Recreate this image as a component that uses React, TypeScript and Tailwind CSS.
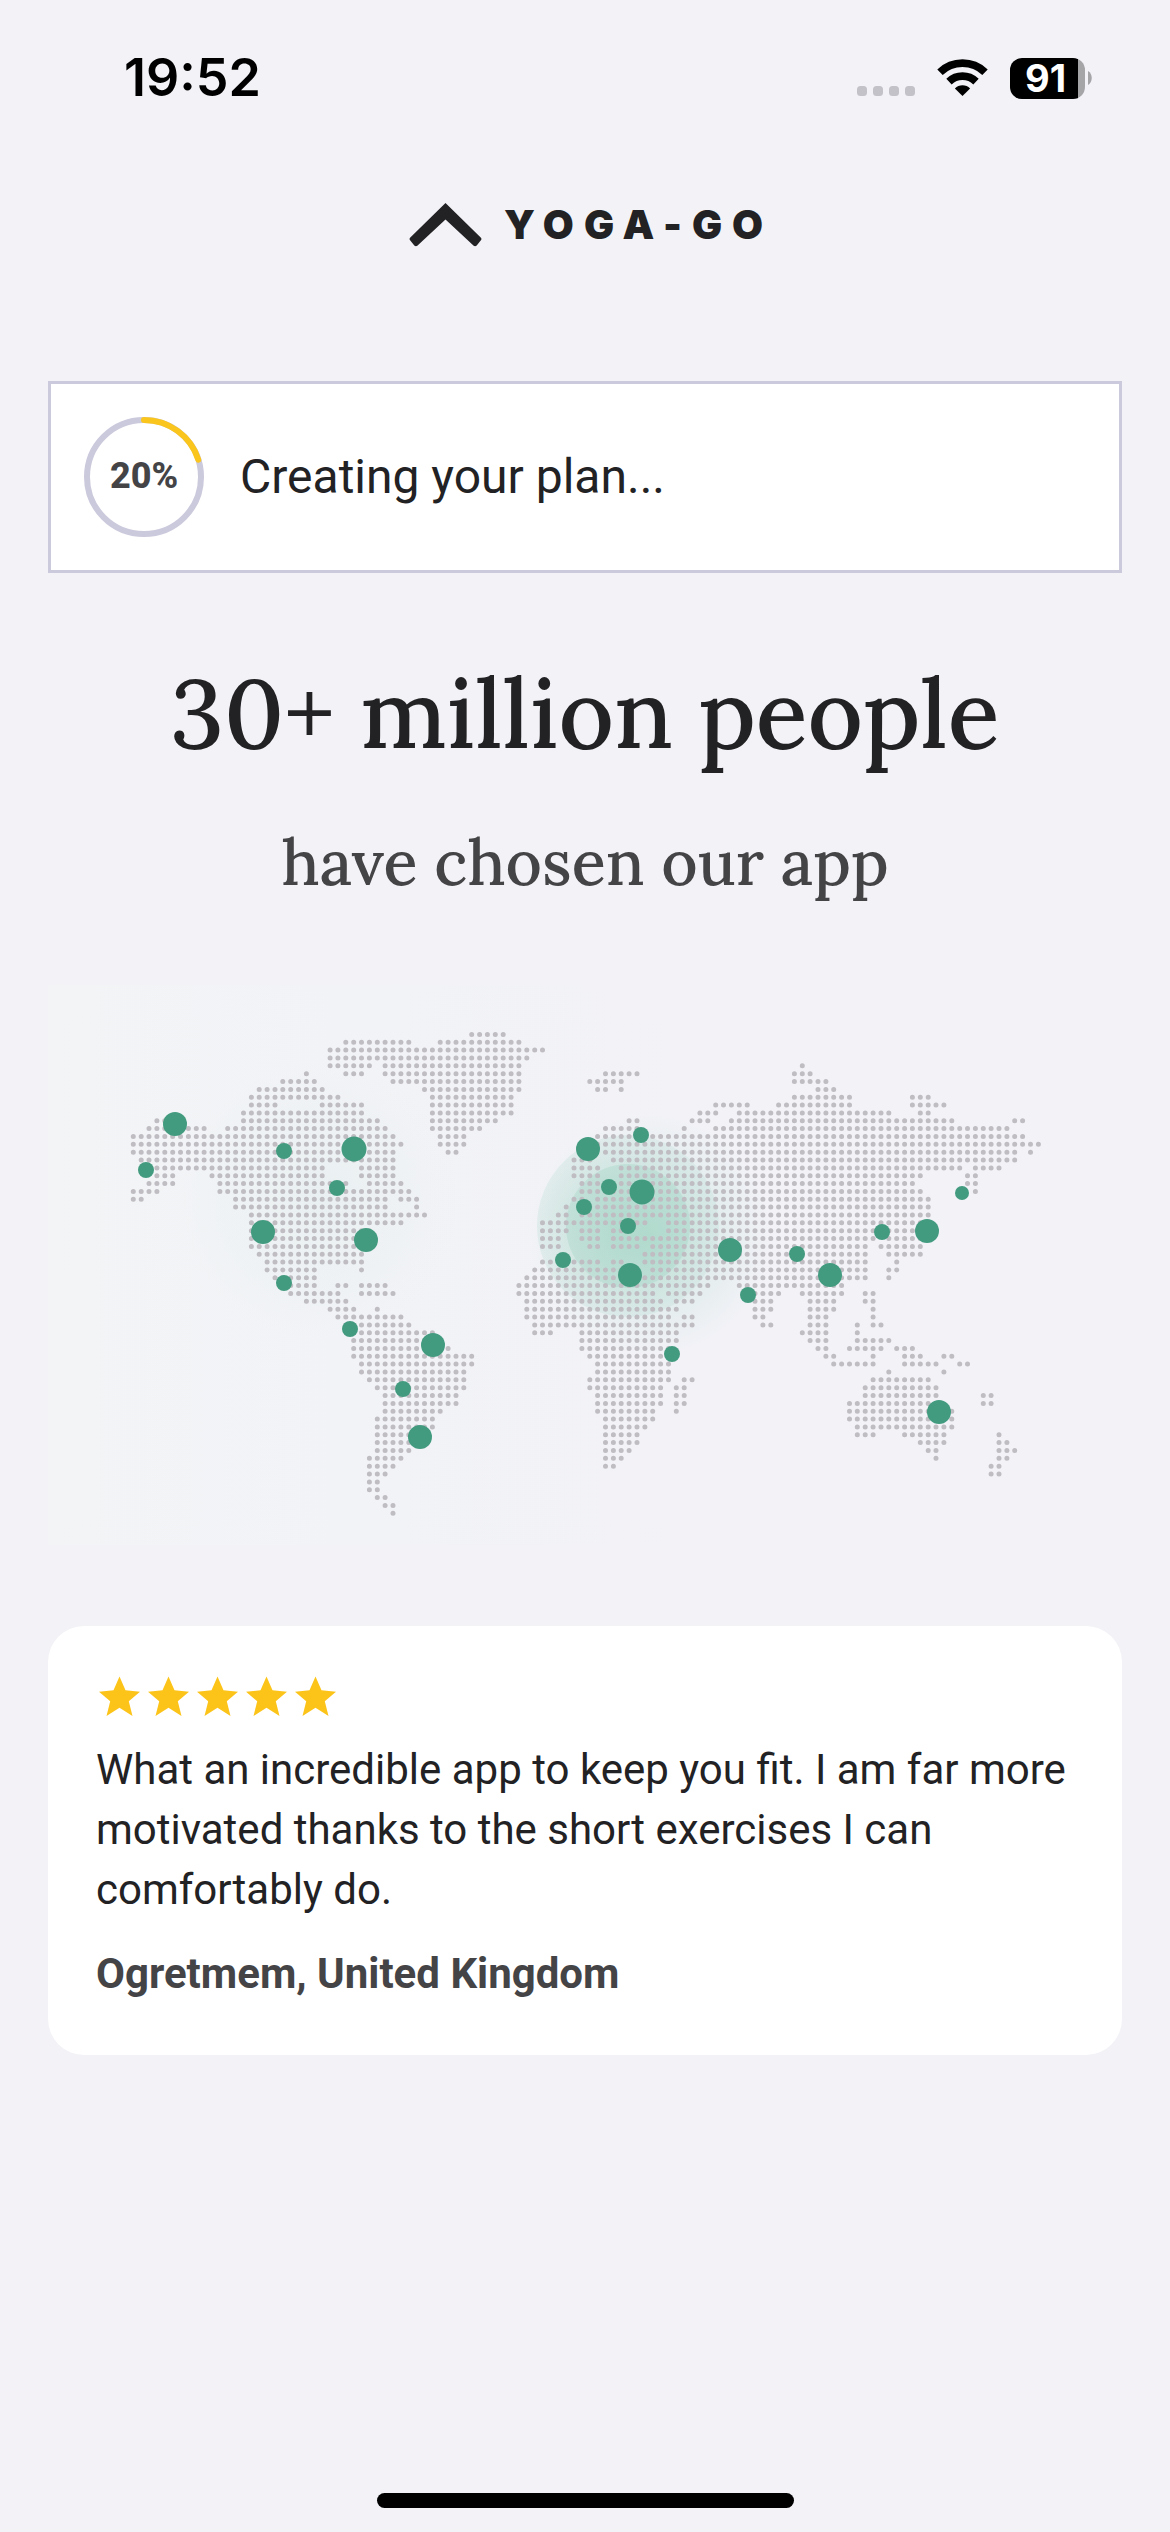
type Run = [number, number];

// Land cells of the dotted map, listed row by row as [first column, last column].
const LAND: Run[][] = [
  [[43, 47]],
  [[27, 35], [39, 49]],
  [[25, 52]],
  [[25, 50]],
  [[25, 30], [32, 49], [85, 85]],
  [[22, 22], [27, 29], [32, 49], [60, 64], [84, 86]],
  [[19, 23], [33, 49], [58, 62], [84, 88]],
  [[16, 24], [37, 49], [59, 60], [62, 62], [87, 89]],
  [[15, 26], [38, 48], [84, 91], [99, 101]],
  [[15, 18], [24, 29], [38, 48], [74, 78], [82, 91], [99, 103]],
  [[14, 29], [38, 48], [72, 74], [77, 96], [100, 101]],
  [[3, 4], [14, 31], [38, 46], [63, 64], [71, 73], [76, 104], [112, 113]],
  [[2, 4], [7, 9], [12, 32], [38, 44], [60, 64], [70, 70], [74, 111]],
  [[0, 33], [39, 42], [59, 113]],
  [[0, 34], [39, 42], [59, 115]],
  [[0, 33], [40, 41], [60, 112], [114, 114]],
  [[1, 33], [56, 58], [61, 112]],
  [[2, 24], [29, 33], [56, 59], [62, 105], [107, 110]],
  [[3, 5], [10, 24], [29, 33], [56, 59], [62, 100], [106, 107]],
  [[2, 5], [11, 27], [30, 34], [57, 60], [62, 99], [106, 107]],
  [[0, 3], [11, 35], [57, 100], [107, 107]],
  [[0, 1], [13, 32], [34, 36], [56, 57], [59, 101]],
  [[13, 32], [36, 36], [55, 55], [57, 101]],
  [[15, 37], [54, 55], [57, 101]],
  [[15, 34], [52, 65], [68, 101]],
  [[15, 30], [52, 55], [57, 59], [61, 62], [68, 94], [96, 99]],
  [[15, 30], [52, 54], [57, 59], [61, 94], [96, 100]],
  [[15, 29], [52, 54], [58, 59], [61, 64], [66, 93], [95, 100]],
  [[16, 29], [65, 93], [96, 100]],
  [[17, 29], [52, 53], [56, 59], [61, 62], [65, 93], [97, 97]],
  [[17, 23], [29, 29], [51, 64], [66, 93], [96, 97]],
  [[18, 23], [50, 93], [96, 96]],
  [[19, 23], [26, 27], [29, 32], [49, 73], [77, 90]],
  [[20, 26], [29, 33], [49, 66], [68, 72], [78, 82], [85, 90], [93, 94]],
  [[22, 27], [50, 67], [69, 71], [79, 81], [86, 89], [93, 94]],
  [[25, 28], [31, 31], [50, 69], [79, 81], [86, 89], [94, 94]],
  [[26, 34], [50, 68], [70, 71], [79, 80], [86, 88], [94, 94]],
  [[27, 35], [51, 71], [80, 81], [86, 88], [92, 92], [94, 95]],
  [[28, 38], [51, 53], [57, 69], [85, 88], [92, 92]],
  [[28, 39], [57, 69], [86, 88], [92, 96]],
  [[28, 40], [57, 68], [87, 88], [91, 95], [97, 99]],
  [[28, 43], [58, 68], [88, 89], [94, 94], [98, 100], [103, 104]],
  [[29, 43], [59, 68], [89, 94], [98, 102], [105, 106]],
  [[29, 42], [59, 68], [96, 96], [103, 103]],
  [[30, 42], [58, 68], [70, 71], [94, 101]],
  [[31, 42], [58, 67], [69, 70], [93, 102]],
  [[32, 41], [59, 67], [69, 70], [93, 102], [108, 109]],
  [[32, 41], [59, 67], [69, 70], [91, 102], [108, 109]],
  [[32, 39], [59, 66], [69, 69], [91, 104]],
  [[31, 38], [60, 66], [91, 104]],
  [[31, 38], [60, 65], [92, 104]],
  [[31, 37], [60, 64], [92, 94], [98, 103], [110, 110]],
  [[31, 36], [60, 64], [100, 103], [110, 111]],
  [[31, 35], [60, 63], [101, 102], [110, 112]],
  [[30, 34], [60, 62], [102, 102], [110, 111]],
  [[30, 33], [60, 61], [109, 110]],
  [[30, 32], [109, 110]],
  [[30, 31]],
  [[30, 31]],
  [[31, 32]],
  [[32, 33]],
  [[33, 33]],
];

// Places with users: [x, y, radius].
const PLACES: [number, number, number][] = [
  [175, 1124, 12], [284, 1151, 8], [354, 1149, 12.5], [146, 1170, 8], [337, 1188, 8],
  [263, 1232, 12], [366, 1240, 12], [284, 1283, 8], [350, 1329, 8], [433, 1345, 12],
  [403, 1389, 8], [420, 1437, 12], [641, 1135, 8], [588, 1149, 12], [609, 1187, 8],
  [642, 1192, 12.5], [584, 1207, 8], [628, 1226, 8], [563, 1260, 8], [630, 1275, 12],
  [730, 1250, 12], [748, 1295, 8], [672, 1354, 8], [962, 1193, 7], [882, 1232, 8],
  [927, 1231, 12], [797, 1254, 8], [830, 1275, 12], [939, 1412, 12],
];

const landPath = LAND.map((runs, row) =>
  runs
    .map(([from, to]) => {
      let d = "";
      for (let col = from; col <= to; col++) {
        d += `M${(133.3 + col * 7.87).toFixed(1)} ${(1034.4 + row * 7.85).toFixed(1)}h0`;
      }
      return d;
    })
    .join("")
).join("");

function StatusBar() {
  return (
    <header className="mt-12 flex h-[60px] items-center justify-between pr-[78px] pl-[124px] text-black">
      <time className="font-['Inter',sans-serif] text-[52px] leading-[60px] font-semibold">19:52</time>
      <div className="flex items-center">
        <svg className="mr-[22px] h-[44px] w-[58px]" viewBox="0 0 58 44" fill="#c3c2c8" aria-label="No signal">
          <rect x="0" y="30" width="10" height="10" rx="3.5" />
          <rect x="16" y="30" width="10" height="10" rx="3.5" />
          <rect x="32" y="30" width="10" height="10" rx="3.5" />
          <rect x="48" y="30" width="10" height="10" rx="3.5" />
        </svg>
        <svg className="mr-[22px] h-[44px] w-[51px]" viewBox="0 0 51 44" aria-label="Wi-Fi">
          <g fill="none" stroke="#000" strokeWidth="7.8">
            <path d="M3 16.2a32.5 32.5 0 0 1 45 0" />
            <path d="M12 25.6a19.6 19.6 0 0 1 27 0" />
          </g>
          <path d="M25.500 40l-7.600-7.500a10.800 10.800 0 0 1 15.200 0z" />
        </svg>
        <div className="flex items-center" role="img" aria-label="Battery 91 percent">
          <div className="flex h-[41px] w-[75px] items-center rounded-xl bg-[linear-gradient(to_right,#000_68px,#a5a5a8_68px)]">
            <span className="w-[75px] pr-1 text-center font-['Inter',sans-serif] text-[38px] leading-[41px] font-bold text-white">91</span>
          </div>
          <svg className="ml-[3px] h-[14px] w-[4px]" viewBox="0 0 4 14" fill="#a5a5a8">
            <path d="M0 0c5 3 5 11 0 14z" />
          </svg>
        </div>
      </div>
    </header>
  );
}

function Logo() {
  return (
    <div className="mt-[93px] flex h-[48px] items-center justify-center gap-[22px] text-[#222224]">
      <svg className="h-[44px] w-[73px]" viewBox="0 0 73 44" fill="currentColor" aria-hidden="true">
        <path d="M36.500 0l35.200 34.500c1 1 1 2 0 3l-4 5c-1 1-2 1-3 .3L36.500 16.500 8.300 42.800c-1 .7-2 .7-3-.3l-4-5c-1-1-1-2 0-3z" />
      </svg>
      <span className="-mr-3 font-['Inter',sans-serif] text-[40px] leading-[48px] font-black tracking-[10px]">YOGA-GO</span>
    </div>
  );
}

function ProgressCard({ percent }: { percent: number }) {
  const circumference = 2 * Math.PI * 57;
  return (
    <section className="mt-[132px] flex items-center gap-9 border-[3px] border-[#cbc9dc] bg-white px-[33px] py-[33px]">
      <div className="grid size-[120px] shrink-0 place-items-center">
        <svg className="col-start-1 row-start-1 size-[120px] -rotate-90" viewBox="0 0 120 120" fill="none" strokeWidth="6">
          <circle cx="60" cy="60" r="57" stroke="#cbc9dc" />
          <circle
            cx="60"
            cy="60"
            r="57"
            stroke="#fac51c"
            strokeLinecap="round"
            strokeDasharray={`${(circumference * percent) / 100} ${circumference}`}
          />
        </svg>
        <span className="col-start-1 row-start-1 pb-[3px] text-[36px] leading-[42px] font-extrabold text-[#444446]">{percent}%</span>
      </div>
      <p className="text-[48px] leading-[60px]">Creating your plan...</p>
    </section>
  );
}

function WorldMap() {
  return (
    <svg className="mt-[81px] block w-full" viewBox="48 985 1074 560" role="img" aria-label="Map of our users around the world">
      <defs>
        <linearGradient id="sea" x1="0" x2="1" y1="0" y2="0">
          <stop offset="0" stopColor="#f2f4f6" />
          <stop offset="0.6" stopColor="#f2f2f7" />
        </linearGradient>
        <radialGradient id="glow">
          <stop offset="0" stopColor="#8fd0b8" stopOpacity="0.35" />
          <stop offset="1" stopColor="#8fd0b8" stopOpacity="0" />
        </radialGradient>
        <radialGradient id="halo" cx="0.45" cy="0.5" r="0.55">
          <stop offset="0" stopColor="#86c9b1" stopOpacity="0.3" />
          <stop offset="1" stopColor="#86c9b1" stopOpacity="0.12" />
        </radialGradient>
      </defs>
      <rect x="48" y="985" width="1074" height="560" fill="url(#sea)" />
      <circle cx="320" cy="1200" r="140" fill="url(#glow)" opacity="0.25" />
      <circle cx="650" cy="1235" r="120" fill="url(#glow)" />
      <circle cx="628" cy="1226" r="91" fill="url(#halo)" />
      <circle cx="628" cy="1226" r="62" fill="#86c9b1" opacity="0.22" />
      <path d={landPath} stroke="#bfbdc2" strokeWidth="5" strokeLinecap="round" />
      <g fill="#439b7f">
        {PLACES.map(([x, y, r]) => (
          <circle key={`${x}-${y}`} cx={x} cy={y} r={r} />
        ))}
      </g>
    </svg>
  );
}

function Review() {
  return (
    <article className="mt-[81px] rounded-[36px] bg-white px-12 pt-[49px] pb-[51px]">
      <div className="flex" role="img" aria-label="5 out of 5 stars">
        {[1, 2, 3, 4, 5].map((n) => (
          <svg key={n} className="h-[42px] w-[49px]" viewBox="0 0 49 42" fill="#fcc419">
            <path d="M23.500 1.500l6 13.800 14.500 1.500-11.200 9.400 3.700 14.800-13-8.200-13 8.200 3.700-14.800L3 16.800l14.500-1.500z" />
          </svg>
        ))}
      </div>
      <p className="mt-[23px] text-[42px] leading-[60px]">
        What an incredible app to keep you fit. I am far more motivated thanks to the short exercises I can comfortably do.
      </p>
      <p className="mt-6 text-[42px] leading-[60px] font-bold text-[#444446]">Ogretmem, United Kingdom</p>
    </article>
  );
}

export default function App() {
  return (
    <div className="flex min-h-screen flex-col bg-[#f2f2f7] font-['Roboto',sans-serif] text-[#222224]">
      <StatusBar />
      <main className="px-12">
        <Logo />
        <ProgressCard percent={20} />
        <h1 className="mt-20 text-center font-['Lora',serif] text-[96px] leading-[120px] font-medium">
          30+ million people
        </h1>
        <h2 className="mt-[47px] text-center font-['Lora',serif] text-[63px] leading-[84px] font-medium text-[#444446]">
          have chosen our app
        </h2>
        <WorldMap />
        <Review />
      </main>
      <div className="mx-auto mt-auto mb-6 h-[15px] w-[417px] rounded-full bg-black" />
    </div>
  );
}
